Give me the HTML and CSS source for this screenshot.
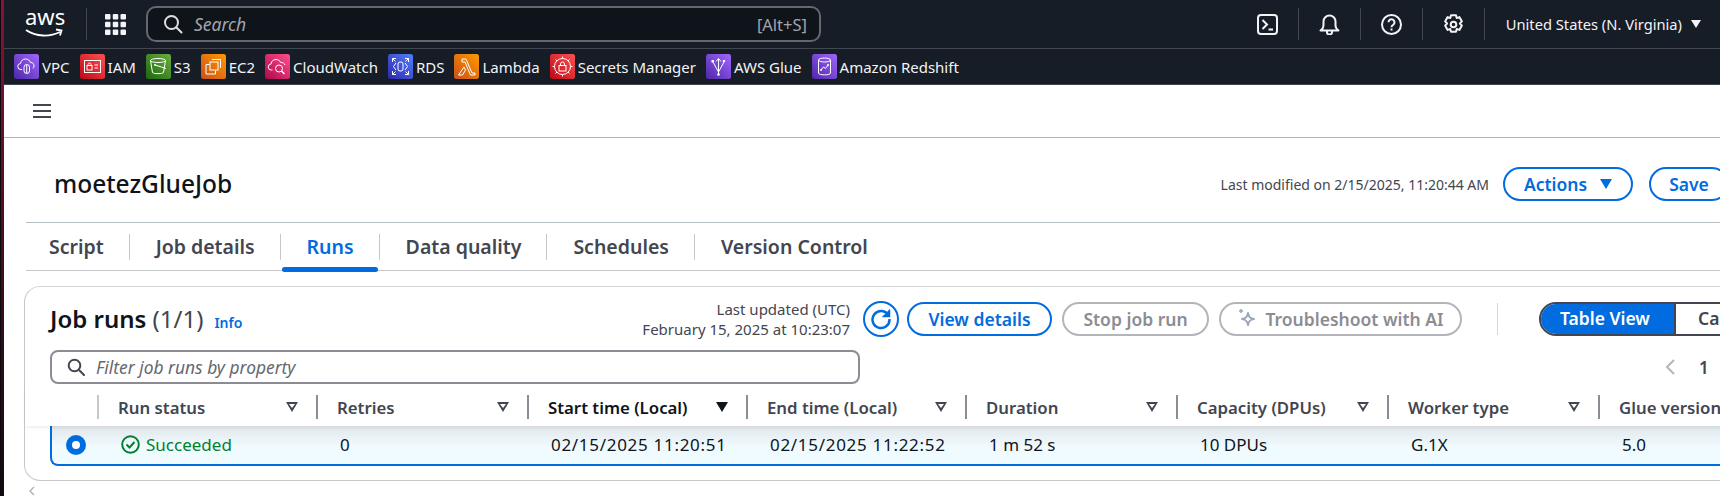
FILE: index.html
```html
<!DOCTYPE html>
<html lang="en">
<head>
    <meta charset="UTF-8">
    <title>moetezGlueJob</title>
    <link rel="stylesheet" href="styles.css">
</head>
<body>
    <div class="screen">
        <div class="edge"></div>
        <div class="console">
            <!-- top nav -->
            <header class="nav">
                <div class="aws-logo">
                    <span class="aws-word">aws</span>
                    <svg class="aws-smile" width="40" height="10" viewBox="0 0 40 10" fill="none" stroke="#fff" stroke-width="1.8">
                        <path d="M1 2c10 7 24 7 34 2"/>
                        <path d="M31 1.500l5.500 1-1.500 5"/>
                    </svg>
                </div>
                <div class="nav-sep"></div>
                <svg class="grid-icon" width="21" height="21" viewBox="0 0 21 21" fill="#f3f3f7">
                    <rect x="0" y="0" width="5.500" height="5.500" rx="1"/><rect x="7.750" y="0" width="5.500" height="5.500" rx="1"/><rect x="15.500" y="0" width="5.500" height="5.500" rx="1"/>
                    <rect x="0" y="7.750" width="5.500" height="5.500" rx="1"/><rect x="7.750" y="7.750" width="5.500" height="5.500" rx="1"/><rect x="15.500" y="7.750" width="5.500" height="5.500" rx="1"/>
                    <rect x="0" y="15.500" width="5.500" height="5.500" rx="1"/><rect x="7.750" y="15.500" width="5.500" height="5.500" rx="1"/><rect x="15.500" y="15.500" width="5.500" height="5.500" rx="1"/>
                </svg>
                <div class="nav-search">
                    <svg width="20" height="20" viewBox="0 0 20 20" fill="none" stroke="#dedee3" stroke-width="2"><circle cx="8.500" cy="8.500" r="6.500"/><path d="M13.500 13.500l5 5" stroke-linecap="round"/></svg>
                    <span class="nav-search-text">Search</span>
                    <span class="nav-shortcut">[Alt+S]</span>
                </div>
                <div class="nav-right">
                    <div class="nav-cell">
                        <svg width="21" height="21" viewBox="0 0 21 21" fill="none" stroke="#f3f3f7" stroke-width="2"><rect x="1" y="1" width="19" height="19" rx="3"/><path d="M5.500 6l4.500 4.500-4.500 4.500"/><path d="M11.500 15.500h4.500"/></svg>
                    </div>
                    <div class="nav-cell">
                        <svg width="21" height="21" viewBox="0 0 21 21" fill="none" stroke="#f3f3f7" stroke-width="2" stroke-linejoin="round"><path d="M1.500 16.500c2-1.500 3-3 3-5v-4a6 6 0 0 1 12 0v4c0 2 1 3.500 3 5z"/><path d="M8 17v1.500a2.500 2 0 0 0 5 0V17"/></svg>
                    </div>
                    <div class="nav-cell">
                        <svg width="21" height="21" viewBox="0 0 21 21" fill="none" stroke="#f3f3f7" stroke-width="2"><circle cx="10.500" cy="10.500" r="9.500"/><path d="M7.500 8.300a3 3 0 1 1 4.600 2.500c-1 .6-1.600 1.200-1.600 2.400"/><path d="M10.500 14.500v2"/></svg>
                    </div>
                    <div class="nav-cell">
                        <svg width="21" height="21" viewBox="0 0 21 21" fill="none" stroke="#f3f3f7" stroke-width="2" stroke-linejoin="round"><path d="M8 1.200h5l.7 2.800 2.700-.9 2.500 4.300-2 2.100 2 2.100-2.500 4.300-2.700-.9-.7 2.800H8l-.7-2.800-2.700.9-2.500-4.300 2-2.100-2-2.100 2.500-4.300 2.700.9z"/><circle cx="10.500" cy="10.500" r="2.800"/></svg>
                    </div>
                    <span class="region">United States (N. Virginia)</span>
                    <span class="caret-white"></span>
                </div>
            </header>

            <!-- pinned services -->
            <nav class="pins">
                <a class="pin">
                    <svg class="pin-icon" viewBox="0 0 25 25"><defs><linearGradient id="gPurple" x1="0" y1="1" x2="1" y2="0"><stop offset="0" stop-color="#4d27a8"/><stop offset="1" stop-color="#a166ff"/></linearGradient><linearGradient id="gRed" x1="0" y1="1" x2="1" y2="0"><stop offset="0" stop-color="#bd0816"/><stop offset="1" stop-color="#ff5252"/></linearGradient><linearGradient id="gGreen" x1="0" y1="1" x2="1" y2="0"><stop offset="0" stop-color="#1b660f"/><stop offset="1" stop-color="#6cae3e"/></linearGradient><linearGradient id="gOrange" x1="0" y1="1" x2="1" y2="0"><stop offset="0" stop-color="#c8511b"/><stop offset="1" stop-color="#ff9900"/></linearGradient><linearGradient id="gPink" x1="0" y1="1" x2="1" y2="0"><stop offset="0" stop-color="#b0084d"/><stop offset="1" stop-color="#ff4f8b"/></linearGradient><linearGradient id="gBlue" x1="0" y1="1" x2="1" y2="0"><stop offset="0" stop-color="#2e27ad"/><stop offset="1" stop-color="#527fff"/></linearGradient></defs><rect width="25" height="25" rx="2.500" fill="url(#gPurple)"/><g fill="none" stroke="#fff" stroke-width="1"><path d="M8 15.500H7a3 3 0 0 1-.5-6c.5-3 2.500-4.500 5-4.500 2.500 0 4.500 1.500 5 3.500 2.500 0 3.500 1.500 3.500 3.500 0 1-.5 2-1 2.500"/><rect x="10" y="10.500" width="5.500" height="9" rx="2.700"/><path d="M12.700 11v8"/></g></svg>
                    VPC
                </a>
                <a class="pin">
                    <svg class="pin-icon" viewBox="0 0 25 25"><rect width="25" height="25" rx="2.500" fill="url(#gRed)"/><g fill="none" stroke="#fff" stroke-width="1"><rect x="4.500" y="6.500" width="16" height="12"/><rect x="7" y="11.500" width="5" height="4.500"/><path d="M8 11.500v-1a1.500 1.500 0 0 1 3 0v1"/><path d="M14.500 11h3.500M14.500 14h3.500"/></g></svg>
                    IAM
                </a>
                <a class="pin">
                    <svg class="pin-icon" viewBox="0 0 25 25"><rect width="25" height="25" rx="2.500" fill="url(#gGreen)"/><g fill="none" stroke="#fff" stroke-width="1"><ellipse cx="12" cy="6.500" rx="7.500" ry="2"/><path d="M4.500 6.500l2 12c.5 1.500 10.500 1.500 11 0l2-12"/><path d="M9 11l11 3.500"/></g><circle cx="9" cy="11" r="1" fill="#fff"/></svg>
                    S3
                </a>
                <a class="pin">
                    <svg class="pin-icon" viewBox="0 0 25 25"><rect width="25" height="25" rx="2.500" fill="url(#gOrange)"/><g fill="none" stroke="#fff" stroke-width="1"><rect x="9" y="8" width="8" height="8"/><path d="M11 5.500h8.500V14M8.500 10.500H5V20h9.500v-3.500"/></g></svg>
                    EC2
                </a>
                <a class="pin">
                    <svg class="pin-icon" viewBox="0 0 25 25"><rect width="25" height="25" rx="2.500" fill="url(#gPink)"/><g fill="none" stroke="#fff" stroke-width="1"><path d="M7.500 16H6.500a3 3 0 0 1-.5-6c.5-3 2.500-4.500 5-4.500 2 0 4 1 4.700 3 2.500 0 3.800 1 4.300 2.500"/><circle cx="14" cy="14.500" r="3.500"/><path d="M16.500 17l3 3" stroke-width="1.500"/></g></svg>
                    CloudWatch
                </a>
                <a class="pin">
                    <svg class="pin-icon" viewBox="0 0 25 25"><rect width="25" height="25" rx="2.500" fill="url(#gBlue)"/><g fill="none" stroke="#fff" stroke-width="1"><rect x="10" y="8" width="5" height="9" rx="2"/><path d="M8 9l-2.500 3.500L8 16M17 9l2.500 3.500L17 16"/><path d="M4.500 8V4.500H8M17 4.500h3.500V8M20.500 17v3.500H17M8 20.500H4.500V17M4.500 4.500l3 3M20.500 4.500l-3 3M20.500 20.500l-3-3M4.500 20.500l3-3"/></g></svg>
                    RDS
                </a>
                <a class="pin">
                    <svg class="pin-icon" viewBox="0 0 25 25"><rect width="25" height="25" rx="2.500" fill="url(#gOrange)"/><path d="M8 5h4l6 14h3v2h-4.500L11 8H8zM10 13l1.500 3-3 5H4.500z" fill="none" stroke="#fff" stroke-width="1"/></svg>
                    Lambda
                </a>
                <a class="pin">
                    <svg class="pin-icon" viewBox="0 0 25 25"><rect width="25" height="25" rx="2.500" fill="url(#gRed)"/><g fill="none" stroke="#fff" stroke-width="1"><circle cx="12.500" cy="12.500" r="8"/><rect x="9" y="11.500" width="7" height="5.500"/><path d="M10.500 11.500V10a2 2 0 0 1 4 0v1.500"/><path d="M12.500 2.500v2M12.500 20.500v2M2.500 12.500h2M20.500 12.500h2M5.500 5.500l1.500 1.500M18 18l1.500 1.500M19.500 5.500L18 7M7 18l-1.500 1.500"/></g></svg>
                    Secrets Manager
                </a>
                <a class="pin">
                    <svg class="pin-icon" viewBox="0 0 25 25"><rect width="25" height="25" rx="2.500" fill="url(#gPurple)"/><g fill="none" stroke="#fff" stroke-width="1"><path d="M7 8l5.500 10L18 8M12.500 5v15"/><path d="M10 7.500l2.500-3 2.500 3"/></g><circle cx="12.500" cy="20.500" r="1.300" fill="#fff"/><rect x="5.500" y="6" width="2.500" height="2.500" fill="#fff"/><circle cx="18" cy="7" r="1.300" fill="#fff"/></svg>
                    AWS Glue
                </a>
                <a class="pin">
                    <svg class="pin-icon" viewBox="0 0 25 25"><rect width="25" height="25" rx="2.500" fill="url(#gPurple)"/><g fill="none" stroke="#fff" stroke-width="1"><ellipse cx="12.500" cy="6" rx="6" ry="2"/><path d="M6.500 6v13c0 2.500 12 2.500 12 0V6"/><path d="M9 16l2.500-3 2 1.500 2.500-3.500"/></g><circle cx="16" cy="11" r="1" fill="#fff"/><circle cx="9" cy="16" r="1" fill="#fff"/></svg>
                    Amazon Redshift
                </a>
            </nav>

            <div class="app-bar">
                <div class="hamburger"><span></span><span></span><span></span></div>
            </div>

            <div class="job-header">
                <h1 class="job-name">moetezGlueJob</h1>
                <span class="modified">Last modified on 2/15/2025, 11:20:44 AM</span>
                <button class="btn btn-actions">Actions <span class="caret-blue"></span></button>
                <button class="btn btn-save">Save</button>
            </div>

            <div class="tabs">
                <div class="tab">Script</div>
                <div class="tab">Job details</div>
                <div class="tab tab-active">Runs</div>
                <div class="tab">Data quality</div>
                <div class="tab">Schedules</div>
                <div class="tab tab-last">Version Control</div>
            </div>

            <section class="card">
                <div class="runs-head">
                    <div class="runs-title">
                        <h2>Job runs <span class="count">(1/1)</span></h2>
                        <a class="info">Info</a>
                    </div>
                    <div class="updated">Last updated (UTC)<br>February 15, 2025 at 10:23:07</div>
                    <button class="btn-refresh">
                        <svg width="22" height="22" viewBox="0 0 22 22" fill="none" stroke="#006ce0" stroke-width="2.500"><path d="M18.500 7.500A8.500 8.500 0 1 0 19.500 11"/><path d="M19.500 1.500v7h-7" fill="#006ce0" stroke-width="1.500"/></svg>
                    </button>
                    <button class="btn btn-view">View details</button>
                    <button class="btn btn-off btn-stop">Stop job run</button>
                    <button class="btn btn-off btn-ai">
                        <svg width="20" height="22" viewBox="0 0 20 22" fill="none" stroke="#9ba7b6" stroke-width="2" stroke-linejoin="round"><path d="M11 5c.6 4 2 5.400 6 6-4 .6-5.400 2-6 6-.6-4-2-5.400-6-6 4-.6 5.400-2 6-6z"/><path d="M4 1v4M2 3h4" stroke-width="1.500"/></svg>
                        Troubleshoot with AI
                    </button>
                    <div class="head-sep"></div>
                    <div class="toggle">
                        <div class="toggle-on">Table View</div>
                        <div class="toggle-off">Card View</div>
                    </div>
                </div>

                <div class="filter-row">
                    <div class="filter">
                        <svg width="18" height="18" viewBox="0 0 18 18" fill="none" stroke="#424650" stroke-width="2"><circle cx="7.500" cy="7.500" r="5.800"/><path d="M12 12l5 5" stroke-linecap="round"/></svg>
                        <span>Filter job runs by property</span>
                    </div>
                    <div class="pager">
                        <svg width="12" height="16" viewBox="0 0 12 16" fill="none" stroke="#b4b4bb" stroke-width="2"><path d="M10 1L3 8l7 7"/></svg>
                        <span>1</span>
                    </div>
                </div>

                <div class="grid grid-head">
                    <div class="th th-first"></div>
                    <div class="th"><span>Run status</span><i class="sort"></i></div>
                    <div class="th"><span>Retries</span><i class="sort"></i></div>
                    <div class="th th-sorted"><span>Start time (Local)</span><i class="sort sort-on"></i></div>
                    <div class="th"><span>End time (Local)</span><i class="sort"></i></div>
                    <div class="th"><span>Duration</span><i class="sort"></i></div>
                    <div class="th"><span>Capacity (DPUs)</span><i class="sort"></i></div>
                    <div class="th"><span>Worker type</span><i class="sort"></i></div>
                    <div class="th"><span>Glue version</span></div>
                </div>

                <div class="grid grid-row">
                    <div class="td td-first"><span class="radio"></span></div>
                    <div class="td status">
                        <svg width="19" height="19" viewBox="0 0 19 19" fill="none" stroke="#00802f" stroke-width="2"><circle cx="9.500" cy="9.500" r="8.300"/><path d="M5.500 9.500l3 3 5-5.500"/></svg>
                        Succeeded
                    </div>
                    <div class="td">0</div>
                    <div class="td td-date">02/15/2025 11:20:51</div>
                    <div class="td td-date">02/15/2025 11:22:52</div>
                    <div class="td">1 m 52 s</div>
                    <div class="td">10 DPUs</div>
                    <div class="td">G.1X</div>
                    <div class="td">5.0</div>
                </div>
            </section>

            <svg class="scroll-left" width="8" height="10" viewBox="0 0 8 10" fill="none" stroke="#b4b4bb" stroke-width="1.500"><path d="M6 1L2 5l4 4"/></svg>
        </div>
    </div>
</body>
</html>
```

FILE: styles.css
```css
* {
    box-sizing: border-box;
}
body {
    margin: 0;
    background: #fff;
    font-family: "Noto Sans", Arial, sans-serif;
    color: #0f141a;
}
h1, h2 {
    margin: 0;
}
.screen {
    display: flex;
    width: 1720px;
    height: 496px;
    overflow: hidden;
}
.edge {
    flex: none;
    width: 4px;
    border-left: 1px solid #0c0a10;
    background: linear-gradient(#8a1238, #3a0c1c 60%, #14090e);
}
.console {
    width: 1716px;
    flex: none;
}

/* top nav */
.nav {
    display: flex;
    align-items: center;
    height: 49px;
    padding-left: 21px;
    background: #161d26;
    border-bottom: 1px solid #424650;
    color: #f3f3f7;
}
.aws-logo {
    position: relative;
    width: 40px;
    height: 30px;
    flex: none;
}
.aws-word {
    display: block;
    font-size: 22px;
    line-height: 22px;
    color: #fff;
    text-align: center;
    margin-top: -4px;
}
.aws-smile {
    position: absolute;
    left: 0;
    top: 19px;
}
.nav-sep {
    width: 1px;
    height: 32px;
    margin-left: 21px;
    background: #424650;
}
.grid-icon {
    margin-left: 18px;
    flex: none;
}
.nav-search {
    display: flex;
    align-items: center;
    width: 675px;
    height: 36px;
    margin-left: 20px;
    padding: 0 12px 0 15px;
    background: #0f141a;
    border: 2px solid #656871;
    border-radius: 10px;
}
.nav-search-text {
    margin-left: 11px;
    font-size: 17.500px;
    font-style: italic;
    color: #a4a4ad;
}
.nav-shortcut {
    margin-left: auto;
    font-size: 16.500px;
    color: #a4a4ad;
}
.nav-right {
    display: flex;
    align-items: center;
    margin-left: auto;
    padding-right: 19px;
}
.nav-cell {
    display: flex;
    align-items: center;
    height: 32px;
    padding: 0 20px;
    border-right: 1px solid #424650;
}
.region {
    margin-left: 21px;
    font-size: 14.700px;
}
.caret-white {
    width: 0;
    height: 0;
    margin-left: 9px;
    border-left: 5px solid transparent;
    border-right: 5px solid transparent;
    border-top: 8px solid #f3f3f7;
}

/* pinned services */
.pins {
    display: flex;
    align-items: center;
    gap: 10px;
    height: 36px;
    padding-left: 10px;
    background: #161d26;
    border-bottom: 1px solid #424650;
}
.pin {
    display: flex;
    align-items: center;
    gap: 3px;
    font-size: 15px;
    color: #f3f3f7;
}
.pin-icon {
    width: 25px;
    height: 25px;
    flex: none;
}

.app-bar {
    display: flex;
    align-items: center;
    height: 53px;
    padding-left: 29px;
    border-bottom: 1px solid #b4b4bb;
}
.hamburger {
    display: flex;
    flex-direction: column;
    gap: 4px;
    width: 18px;
}
.hamburger span {
    height: 2px;
    background: #424650;
}

.job-header {
    display: flex;
    align-items: center;
    height: 84px;
    padding: 8px 0 0 50px;
    margin-right: -9px;
}
.job-name {
    font-size: 24.500px;
    font-weight: 500;
    line-height: 28px;
}
.modified {
    margin-left: auto;
    font-size: 14px;
    color: #424650;
}
.btn {
    display: flex;
    align-items: center;
    justify-content: center;
    height: 34px;
    padding: 0;
    background: #fff;
    border: 2px solid #006ce0;
    border-radius: 17px;
    font-family: inherit;
    font-size: 17.500px;
    font-weight: 600;
    color: #006ce0;
}
.btn-actions {
    width: 130px;
    margin-left: 14px;
    gap: 13px;
}
.caret-blue {
    width: 0;
    height: 0;
    border-left: 6.500px solid transparent;
    border-right: 6.500px solid transparent;
    border-top: 10px solid #006ce0;
}
.btn-save {
    width: 80px;
    margin-left: 16px;
}

/* tabs */
.tabs {
    position: relative;
    display: flex;
    align-items: center;
    height: 49px;
    margin-left: 22px;
    border-top: 1px solid #b4c0c4;
    border-bottom: 1px solid #c6c6cd;
}
.tab {
    position: relative;
    height: 26px;
    padding: 0 25px 0 26px;
    border-right: 1px solid #c6c6cd;
    font-size: 19.500px;
    font-weight: 600;
    line-height: 25px;
    color: #424650;
}
.tab:first-child {
    padding-left: 23px;
}
.tab-last {
    border-right: 0;
}
.tab-active {
    color: #006ce0;
}
.tab-active::after {
    content: "";
    position: absolute;
    left: 1px;
    right: 1px;
    bottom: -12px;
    height: 5px;
    border-radius: 3px;
    background: #006ce0;
}

/* job runs card */
.card {
    width: 1771px;
    height: 195px;
    margin: 15px 0 0 20px;
    border: 1px solid #c6c6cd;
    border-top-color: #d5d5dc;
    border-radius: 16px;
}
.runs-head {
    display: flex;
    align-items: center;
    height: 34px;
    margin-top: 15px;
    padding: 0 16px 0 25px;
}
.runs-title {
    display: flex;
    align-items: baseline;
    flex: 1;
}
.runs-title h2 {
    font-size: 24px;
    font-weight: 600;
    line-height: 28px;
}
.count {
    font-weight: 400;
    color: #424650;
}
.info {
    margin-left: 11px;
    font-size: 14px;
    font-weight: 600;
    color: #006ce0;
}
.updated {
    font-size: 15px;
    line-height: 20px;
    text-align: right;
    color: #424650;
}
.btn-refresh {
    display: flex;
    align-items: center;
    justify-content: center;
    width: 36px;
    height: 36px;
    margin-left: 13px;
    padding: 0;
    background: #fff;
    border: 2px solid #006ce0;
    border-radius: 50%;
}
.btn-view {
    width: 145px;
    margin-left: 8px;
}
.btn-off {
    border-color: #b4b4bb;
    color: #8c8c94;
}
.btn-stop {
    width: 147px;
    margin-left: 10px;
}
.btn-ai {
    width: 243px;
    margin-left: 10px;
    gap: 8px;
}
.head-sep {
    width: 1px;
    height: 32px;
    margin-left: 35px;
    background: #d5d5dc;
}
.toggle {
    display: flex;
    height: 34px;
    margin-left: 41px;
    border: 2px solid #424650;
    border-radius: 17px;
    overflow: hidden;
    font-size: 17.500px;
    font-weight: 600;
    line-height: 29px;
}
.toggle-on {
    width: 133px;
    padding-left: 19px;
    background: #006ce0;
    color: #fff;
}
.toggle-off {
    width: 102px;
    padding-left: 22px;
    border-left: 2px solid #424650;
    color: #424650;
    white-space: nowrap;
}

.filter-row {
    display: flex;
    align-items: center;
    height: 34px;
    margin-top: 14px;
    padding-left: 25px;
}
.filter {
    display: flex;
    align-items: center;
    gap: 11px;
    width: 810px;
    height: 34px;
    padding-left: 15px;
    border: 2px solid #8c8c94;
    border-radius: 8px;
    font-size: 17.400px;
    font-style: italic;
    color: #656871;
}
.pager {
    display: flex;
    align-items: center;
    gap: 23px;
    margin-left: 804px;
    font-size: 17px;
    font-weight: 600;
    color: #424650;
}

/* table */
.grid {
    display: grid;
    grid-template-columns: 74px 219px 211px 219px 219px 211px 211px 211px 211px;
}
.grid-head {
    position: relative;
    z-index: 1;
    align-items: center;
    height: 42px;
    padding-top: 4px;
    box-shadow: 0 2px 4px -1px rgba(15, 20, 26, 0.1);
    background: #fff;
}
.th {
    display: flex;
    align-items: center;
    height: 24px;
    padding: 0 18px 0 19px;
    border-right: 2px solid #8c8c94;
    font-size: 16.800px;
    font-weight: 600;
    color: #424650;
    white-space: nowrap;
}
.th:last-child {
    border-right: 0;
}
.th-first {
    border-right-color: #c6c6cd;
}
.th-sorted {
    color: #0f141a;
}
.sort {
    width: 0;
    height: 0;
    margin-left: auto;
    position: relative;
    border-left: 6.500px solid transparent;
    border-right: 6.500px solid transparent;
    border-top: 10px solid #424650;
}
.sort::after {
    content: "";
    position: absolute;
    left: -3px;
    top: -8px;
    border-left: 3px solid transparent;
    border-right: 3px solid transparent;
    border-top: 4.500px solid #fff;
}
.sort-on {
    border-top-color: #0f141a;
}
.sort-on::after {
    display: none;
}
.grid-row {
    grid-template-columns: 49px 219px 211px 219px 219px 211px 211px 211px 211px;
    align-items: center;
    height: 40px;
    margin-left: 25px;
    padding-bottom: 1px;
    background: linear-gradient(#e1e7eb, #f0fbff 55%);
    border-left: 2px solid #006ce0;
    border-bottom: 2px solid #006ce0;
    border-bottom-left-radius: 8px;
    font-size: 17px;
}
.td {
    padding-left: 20px;
}
.td-date {
    letter-spacing: 0.7px;
}
.td-first {
    display: flex;
    padding-left: 14px;
}
.radio {
    width: 20px;
    height: 20px;
    border: 6px solid #006ce0;
    border-radius: 50%;
    background: #fff;
}
.status {
    display: flex;
    align-items: center;
    gap: 6px;
    color: #00802f;
}
.scroll-left {
    display: block;
    margin: 5px 0 0 24px;
}
```
